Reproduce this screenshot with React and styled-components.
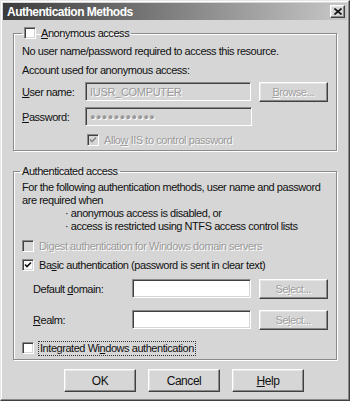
import React from 'react';
import styled, {createGlobalStyle, css} from "styled-components"

const Global = createGlobalStyle`
    body{
        margin:0;
        background:#d6d6d6;
    }
`

const bevelOut = css`
    border:1px solid;
    border-color:#ffffff #404040 #404040 #ffffff;
    box-shadow:inset -1px -1px 0 #8a8a8a, inset 1px 1px 0 #e6e6e6;
`
const bevelIn = css`
    border:1px solid;
    border-color:#8a8a8a #ffffff #ffffff #8a8a8a;
    box-shadow:inset 1px 1px 0 #404040, inset -1px -1px 0 #d6d6d6;
`

const Window = styled.div`
    width:350px;
    height:401px;
    box-sizing:border-box;
    background:#d6d6d6;
    border:1px solid;
    border-color:#e6e6e6 #404040 #404040 #e6e6e6;
    box-shadow:inset -1px -1px 0 #8a8a8a, inset 1px 1px 0 #ffffff;
    padding:2px;
    font-family:"Liberation Sans", Arial, sans-serif;
    font-size:11px;
    letter-spacing:-0.45px;
    color:#111;
`
const TitleBar = styled.div`
    height:17px;
    display:flex;
    align-items:center;
    justify-content:space-between;
    padding:0 2px 0 4px;
    background:linear-gradient(to right,#3c3c3c 0%,#7a7a7a 45%,#c8c8c8 100%);
    color:#fff;
    font-weight:bold;
    font-size:12px;
    letter-spacing:-0.5px;
`
const CloseBtn = styled.div`
    width:15px;
    height:13px;
    box-sizing:border-box;
    background:#d6d6d6;
    ${bevelOut};
    display:flex;
    align-items:center;
    justify-content:center;
`
const Body = styled.div`
    padding:6px 10px 0 10px;
`
const Group = styled.fieldset`
    margin:${p=>p.$top}px 0 0 0;
    padding:${p=>p.$pt}px 8px ${p=>p.$pb}px 8px;
    border:1px solid #8a8a8a;
    box-shadow:1px 1px 0 #ffffff, inset 1px 1px 0 #ffffff;
    min-width:0;
`
const Legend = styled.legend`
    padding:0 2px;
    margin-left:${p=>p.$shift||0}px;
    display:flex;
    align-items:center;
    height:14px;
`
const Line = styled.div`
    line-height:${p=>p.$lh||14}px;
    margin-top:${p=>p.$mt||0}px;
    padding-left:${p=>p.$indent||0}px;
    white-space:nowrap;
`
const Row = styled.div`
    display:flex;
    align-items:center;
    margin-top:${p=>p.$mt||0}px;
    padding-left:${p=>p.$indent||0}px;
    height:${p=>p.$h||19}px;
`
const Label = styled.span`
    width:${p=>p.$w}px;
    flex:none;
    white-space:nowrap;
`
const Input = styled.div`
    width:${p=>p.$w}px;
    height:19px;
    box-sizing:border-box;
    ${bevelIn};
    background:${p=>p.$off?"#d6d6d6":"#ffffff"};
    color:#9a9a9a;
    text-shadow:${p=>p.$off?"1px 1px 0 #fff":"none"};
    display:flex;
    align-items:center;
    padding-left:4px;
    font-size:${p=>p.$dots?9:11}px;
    letter-spacing:${p=>p.$dots?"0.5px":"-0.3px"};
`
const Button = styled.div`
    width:${p=>p.$w||70}px;
    height:${p=>p.$h||20}px;
    box-sizing:border-box;
    ${bevelOut};
    background:#d6d6d6;
    margin-left:${p=>p.$ml||0}px;
    display:flex;
    align-items:center;
    justify-content:center;
    color:${p=>p.$off?"#a0a0a0":"#111"};
    text-shadow:${p=>p.$off?"1px 1px 0 #fff":"none"};
    font-size:${p=>p.$fs||11}px;
`
const BoxWrap = styled.div`
    display:flex;
    align-items:center;
    margin-left:${p=>p.$ml||0}px;
`
const Box = styled.div`
    width:12px;
    height:12px;
    box-sizing:border-box;
    ${bevelIn};
    background:${p=>p.$off?"#d6d6d6":"#ffffff"};
    margin-right:5px;
    display:flex;
    align-items:center;
    justify-content:center;
`
const BoxText = styled.span`
    white-space:nowrap;
    color:${p=>p.$off?"#9a9a9a":"#111"};
    text-shadow:${p=>p.$off?"1px 1px 0 #fff":"none"};
    outline:${p=>p.$focus?"1px dotted #333":"none"};
    padding:0 ${p=>p.$focus?1:0}px;
    line-height:13px;
`
const Footer = styled.div`
    display:flex;
    margin-top:9px;
    padding-left:51px;
    gap:12px;
`

const U = ({children}) => <span style={{textDecoration:"underline"}}>{children}</span>

function Check({checked, off, focus, ml, children}) {
    return (
        <BoxWrap $ml={ml}>
            <Box $off={off}>
                {checked && (
                    <svg width="8" height="8" viewBox="0 0 8 8">
                        <polyline points="1,3.5 3,5.5 7,1.5" fill="none" stroke={off ? "#8a8a8a" : "#111"} strokeWidth="1.6"/>
                    </svg>
                )}
            </Box>
            <BoxText $off={off} $focus={focus}>{children}</BoxText>
        </BoxWrap>
    )
}

export default function App() {
    return (
        <>
            <Global/>
            <Window>
                <TitleBar>
                    <span>Authentication Methods</span>
                    <CloseBtn>
                        <svg width="8" height="7" viewBox="0 0 8 7">
                            <path d="M0.5 0.5 L7.5 6.5 M7.5 0.5 L0.5 6.5" stroke="#111" strokeWidth="1.6"/>
                        </svg>
                    </CloseBtn>
                </TitleBar>
                <Body>
                    <Group $top={0} $pt={4} $pb={3}>
                        <Legend>
                            <Check><U>A</U>nonymous access</Check>
                        </Legend>
                        <Line>No user name/password required to access this resource.</Line>
                        <Line $mt={5}>Account used for anonymous access:</Line>
                        <Row $mt={5}>
                            <Label $w={63}><U>U</U>ser name:</Label>
                            <Input $w={167} $off>IUSR_COMPUTER</Input>
                            <Button $ml={8} $off><U>B</U>rowse...</Button>
                        </Row>
                        <Row $mt={6}>
                            <Label $w={63}><U>P</U>assword:</Label>
                            <Input $w={167} $off $dots>●●●●●●●●●●●</Input>
                        </Row>
                        <Row $mt={7} $h={14}>
                            <Check checked off ml={65}>Allo<U>w</U> IIS to control password</Check>
                        </Row>
                    </Group>
                    <Group $top={13} $pt={3} $pb={4}>
                        <Legend $shift={-2}>Authenticated access</Legend>
                        <Line $lh={13}>For the following authentication methods, user name and password</Line>
                        <Line $lh={13}>are required when</Line>
                        <Line $lh={13} $indent={43}>· anonymous access is disabled, or</Line>
                        <Line $lh={13} $indent={43}>· access is restricted using NTFS access control lists</Line>
                        <Row $mt={6} $h={14}>
                            <Check off>Di<U>g</U>est authentication for Windows domain servers</Check>
                        </Row>
                        <Row $mt={5} $h={14}>
                            <Check checked>Ba<U>s</U>ic authentication (password is sent in clear text)</Check>
                        </Row>
                        <Row $mt={7} $indent={11}>
                            <Label $w={99}>Default <U>d</U>omain:</Label>
                            <Input $w={120}/>
                            <Button $ml={8} $off>Se<U>l</U>ect...</Button>
                        </Row>
                        <Row $mt={12} $indent={11}>
                            <Label $w={99}><U>R</U>ealm:</Label>
                            <Input $w={120}/>
                            <Button $ml={8} $off>Se<U>l</U>ect...</Button>
                        </Row>
                        <Row $mt={12} $h={14}>
                            <Check focus>Integrated Wi<U>n</U>dows authentication</Check>
                        </Row>
                    </Group>
                    <Footer>
                        <Button $w={72} $h={23} $fs={12}>OK</Button>
                        <Button $w={72} $h={23} $fs={12}>Cancel</Button>
                        <Button $w={72} $h={23} $fs={12}><U>H</U>elp</Button>
                    </Footer>
                </Body>
            </Window>
        </>
    )
}
